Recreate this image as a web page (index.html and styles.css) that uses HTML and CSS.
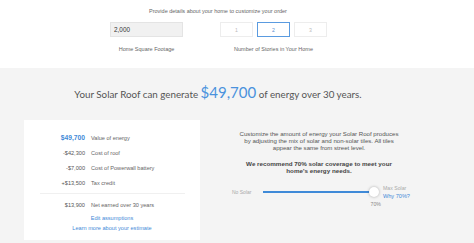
FILE: index.html
```html
<!DOCTYPE html>
<html lang="en">
<head>
  <meta charset="UTF-8">
  <title>Solar Roof Estimate</title>
  <link rel="stylesheet" href="styles.css">
</head>
<body>
<section class="details">
  <div class="page">
    <p class="details-title">Provide details about your home to customize your order</p>
    <div class="fields">
      <div class="field">
        <div class="text-input">2,000</div>
        <span class="field-label">Home Square Footage</span>
      </div>
      <div class="field">
        <div class="stories">
          <button class="story">1</button>
          <button class="story active">2</button>
          <button class="story">3</button>
        </div>
        <span class="field-label">Number of Stories in Your Home</span>
      </div>
    </div>
  </div>
</section>

<section class="estimate">
  <div class="page">
    <h1 class="headline">Your Solar Roof can generate <span class="headline-amount">$49,700</span> of energy over 30 years.</h1>
    <div class="estimate-body">
      <div class="breakdown">
        <div class="rows">
          <span class="amount amount-main">$49,700</span><span class="row-label">Value of energy</span>
          <span class="amount">-$42,300</span><span class="row-label">Cost of roof</span>
          <span class="amount">-$7,000</span><span class="row-label">Cost of Powerwall battery</span>
          <span class="amount">+$13,500</span><span class="row-label">Tax credit</span>
        </div>
        <hr class="divider">
        <div class="rows">
          <span class="amount">$13,900</span><span class="row-label">Net earned over 30 years</span>
        </div>
        <a href="#" class="link link-edit">Edit assumptions</a>
        <a href="#" class="link">Learn more about your estimate</a>
      </div>

      <div class="coverage">
        <p class="coverage-text">Customize the amount of energy your Solar Roof produces by adjusting the mix of solar and non-solar tiles. All tiles appear the same from street level.</p>
        <p class="coverage-note">We recommend 70% solar coverage to meet your home's energy needs.</p>
        <div class="slider">
          <span class="slider-min">No Solar</span>
          <div class="track">
            <div class="thumb"></div>
            <span class="thumb-value">70%</span>
          </div>
          <div class="slider-max">
            <span>Max Solar</span>
            <a href="#" class="why">Why 70%?</a>
          </div>
        </div>
      </div>
    </div>
  </div>
</section>
</body>
</html>
```

FILE: styles.css
```css
* {
  margin: 0;
  padding: 0;
  box-sizing: border-box;
}

body {
  font-family: 'Liberation Sans', Arial, Helvetica, sans-serif;
  color: #555;
  background: #f4f4f4;
  width: 474px;
  height: 243px;
  overflow: hidden;
}

a {
  color: #3f8ad8;
  text-decoration: none;
}

.page {
  width: 436px;
}

/* top: home details */
.details {
  background: #fff;
  height: 68px;
  padding-top: 8px;
}

.details-title {
  text-align: center;
  font-size: 5.5px;
  line-height: 7px;
  color: #666;
}

.fields {
  display: flex;
  gap: 37px;
  padding-left: 110px;
  margin-top: 7px;
}

.field {
  display: flex;
  flex-direction: column;
  align-items: center;
}

.text-input {
  width: 73px;
  height: 15px;
  background: #f1f1f1;
  border: 1px solid #e4e4e4;
  font-size: 6.4px;
  color: #333;
  line-height: 13px;
  padding-left: 3px;
}

.stories {
  display: flex;
  gap: 4px;
}

.story {
  width: 33px;
  height: 15px;
  background: #fff;
  border: 1px solid #ededed;
  font-family: inherit;
  font-size: 5.2px;
  color: #bbb;
}

.story.active {
  border-color: #5a9be0;
  color: #5a8fd0;
}

.field-label {
  margin-top: 9px;
  font-size: 5.5px;
  color: #666;
}

/* estimate */
.estimate {
  padding-top: 16px;
}

.headline {
  text-align: center;
  font-family: 'Lato', sans-serif;
  font-weight: normal;
  font-size: 9.8px;
  line-height: 17px;
  color: #555;
}

.headline-amount {
  font-size: 15px;
  color: #4a92dd;
}

.estimate-body {
  display: flex;
  gap: 28px;
  padding-left: 24px;
  margin-top: 17px;
}

.breakdown {
  width: 176px;
  height: 120px;
  background: #fff;
  padding-top: 14px;
  display: flex;
  flex-direction: column;
  align-items: center;
}

.rows {
  display: grid;
  grid-template-columns: 61px 1fr;
  column-gap: 6px;
  row-gap: 7px;
  width: 176px;
  font-size: 5.6px;
  line-height: 8px;
}

.amount {
  text-align: right;
  color: #555;
}

.amount-main {
  color: #3f8ad8;
  font-weight: bold;
  font-size: 6.7px;
}

.row-label {
  color: #666;
}

.divider {
  width: 145px;
  border: none;
  border-top: 1px solid #f0f0f0;
  margin: 6px 0 7px;
}

.link {
  font-size: 5.6px;
  line-height: 8px;
}

.link-edit {
  margin-top: 5px;
  margin-bottom: 2px;
}

/* coverage slider */
.coverage {
  width: 182px;
  padding-top: 10px;
  text-align: center;
}

.coverage-text {
  padding: 0 8px;
  font-size: 6.1px;
  line-height: 7px;
  color: #555;
}

.coverage-note {
  margin-top: 9px;
  padding: 0 8px;
  font-size: 6.25px;
  line-height: 7px;
  font-weight: bold;
  color: #444;
}

.slider {
  display: flex;
  align-items: center;
  margin-top: 10px;
  padding-left: 4px;
  text-align: left;
}

.slider-min {
  width: 31px;
  font-size: 5px;
  color: #aaa;
}

.track {
  position: relative;
  width: 111px;
  height: 2px;
  background: #3f8ad8;
}

.thumb {
  position: absolute;
  right: -5px;
  top: -4px;
  width: 10px;
  height: 10px;
  border-radius: 50%;
  background: #fff;
  box-shadow: 0 0 3px rgba(0, 0, 0, 0.3);
}

.thumb-value {
  position: absolute;
  right: -7px;
  top: 10px;
  font-size: 5.2px;
  color: #888;
}

.slider-max {
  display: flex;
  flex-direction: column;
  margin-left: 9px;
  font-size: 5.2px;
  line-height: 8px;
  color: #aaa;
}

.why {
  font-size: 5.6px;
}
```
